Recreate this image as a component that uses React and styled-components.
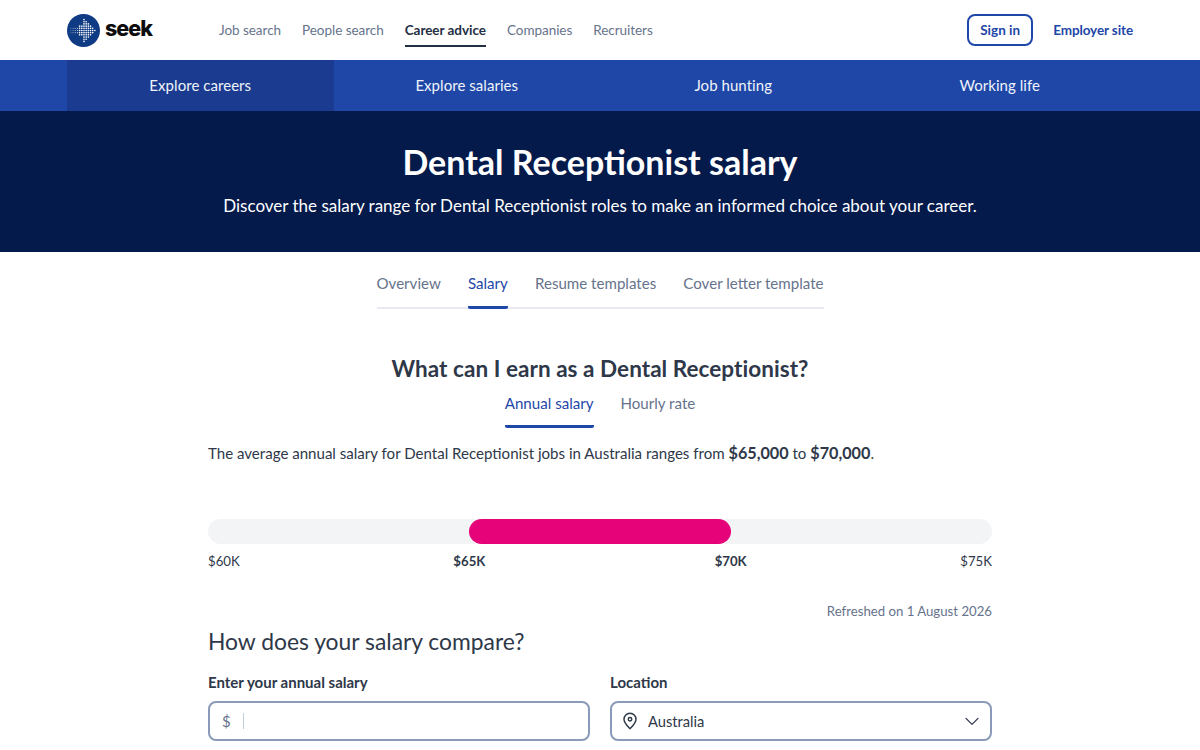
import React from "react";
import styled, { createGlobalStyle } from "styled-components";

const Global = createGlobalStyle`
  html, body { margin: 0; padding: 0; background: #fff; height: 750px; overflow: hidden; }
  body { font-family: "Lato", "Liberation Sans", sans-serif; color: #2e3849; -webkit-font-smoothing: antialiased; }
  * { box-sizing: border-box; }
`;

const Header = styled.header`
  height: 60px; display: flex; align-items: center; padding: 0 67px; background: #fff;
`;
const Brand = styled.a`
  display: flex; align-items: center; gap: 5px; width: 152px; flex: none; color: #0d0d0d; text-decoration: none;
`;
const BrandName = styled.span`
  font-family: "Inter", sans-serif; font-weight: 800; font-size: 21.5px; letter-spacing: -1px; line-height: 1; margin-top: -3px;
`;
const MainNav = styled.nav`
  display: flex; gap: 21px; height: 60px; align-items: center;
`;
const NavLink = styled.a`
  font-size: 13.5px; line-height: 22px; height: 28px; margin-top: 5px; letter-spacing: -0.04px;
  color: ${p => (p.$active ? "#232f45" : "#66738c")};
  font-weight: ${p => (p.$active ? 700 : 400)};
  border-bottom: ${p => (p.$active ? "2px solid #232f45" : "2px solid transparent")};
`;
const HeaderRight = styled.div`
  margin-left: auto; display: flex; align-items: center; gap: 20px;
`;
const SignIn = styled.a`
  width: 66px; height: 32px; border: 2px solid #1e47a8; border-radius: 8px; color: #1e47a8; font-size: 13.5px; font-weight: 700;
  display: flex; align-items: center; justify-content: center; padding-bottom: 1px;
`;
const Employer = styled.a`
  color: #1e47a8; font-size: 13.5px; font-weight: 700; letter-spacing: -0.1px; margin-top: -1px;
`;
const SubNav = styled.nav`
  height: 51px; background: #1e47a8; padding: 0 67px; display: grid; grid-template-columns: repeat(4, 1fr);
`;
const SubItem = styled.a`
  display: flex; align-items: center; justify-content: center; color: #f0f3fa; font-size: 15px; letter-spacing: 0.05px; padding-bottom: 2px;
  background: ${p => (p.$active ? "#1a3b8f" : "transparent")};
`;
const Hero = styled.section`
  height: 141px; background: #041a4b; color: #fff; display: flex; flex-direction: column; align-items: center; padding-top: 31px;
`;
const HeroTitle = styled.h1`
  margin: 0; font-size: 34px; line-height: 40px; font-weight: 700;
`;
const HeroSub = styled.p`
  margin: 11px 0 0; font-size: 17px; line-height: 26px;
`;
const Tabs = styled.div`
  display: flex; justify-content: ${p => (p.$line ? "space-between" : "center")}; gap: ${p => p.$gap}px;
  ${p => p.$line && "width: 447px; margin: 0 auto; border-bottom: 2px solid #e8eaf0;"}
`;
const Tab = styled.a`
  font-size: 15.1px; display: block; white-space: nowrap;
  padding-bottom: ${p => p.$pad}px; margin-bottom: ${p => p.$over}px;
  color: ${p => (p.$active ? "#1e47a8" : "#66738c")};
  border-bottom: 3px solid ${p => (p.$active ? "#1e47a8" : "transparent")};
  border-radius: 0 0 2px 2px;
  line-height: 22px;
`;
const TabsWrap = styled.div`
  padding-top: 20px;
`;
const Main = styled.main`
  width: 784px; margin: 0 auto;
`;
const Question = styled.h2`
  margin: 45px 0 0; text-align: center; font-size: 22.5px; line-height: 30px; font-weight: 700; color: #2e3849; letter-spacing: 0.05px;
`;
const RateTabs = styled.div`
  margin-top: 8px;
`;
const Summary = styled.p`
  margin: 13px 0 0; font-size: 15.07px; line-height: 24px; color: #2e3849;
  strong { font-weight: 700; font-size: 16.2px; }
`;
const Bar = styled.div`
  margin-top: 54px; height: 25px; border-radius: 13px; background: #f3f4f6; display: flex;
`;
const BarFill = styled.div`
  margin-left: ${p => p.$start}%; width: ${p => p.$span}%; background: #e60278; border-radius: 13px;
`;
const Ticks = styled.div`
  margin-top: 7px; display: grid; grid-template-columns: 1fr 2fr 2fr 1fr; font-size: 13.2px; line-height: 20px; color: #2e3849;
`;
const Tick = styled.span`
  text-align: ${p => p.$align};
  font-weight: ${p => (p.$bold ? 700 : 400)};
`;
const Refreshed = styled.p`
  margin: 30px 0 0; text-align: right; font-size: 13.2px; line-height: 20px; color: #66738c;
`;
const Compare = styled.h3`
  margin: 4px 0 0; font-size: 22.85px; line-height: 32px; font-weight: 400; color: #2e3849;
`;
const Form = styled.div`
  margin-top: 14px; display: grid; grid-template-columns: 1fr 1fr; gap: 20px;
`;
const Field = styled.div`
  display: flex; flex-direction: column; gap: 8px;
`;
const Label = styled.label`
  font-size: 15px; line-height: 22px; font-weight: 700; color: #2e3849;
`;
const Control = styled.div`
  height: 40px; border: 2px solid #8a9ab8; border-radius: 8px; display: flex; align-items: center; padding: 0 10px; font-size: 14.7px; color: #2e3849;
`;
const Dollar = styled.span`
  color: #66738c; font-size: 15px; margin: 0 12px 0 2px;
`;
const Caret = styled.span`
  width: 1px; height: 16px; background: #c4ccd9;
`;
const Place = styled.span`
  margin-left: 10px; flex: 1;
`;

const columns = [3, 3, 3, 3, 5, 5, 11, 9, 7, 5, 3, 1];

function Logo() {
  const dots = [];
  columns.forEach((n, i) => {
    const x = 4 + i * 2.25;
    for (let k = 0; k < n; k++) {
      const y = 17 + (k - (n - 1) / 2) * 2.25;
      dots.push(
        <circle
          key={`${i}-${k}`}
          cx={x}
          cy={y}
          r={i < 4 ? 0.6 : 0.85}
          fill="#fff"
          opacity={i < 4 ? 0.35 + i * 0.15 : 1}
        />
      );
    }
  });
  return (
    <svg width="33" height="33" viewBox="0 0 34 34">
      <circle cx="17" cy="17" r="17" fill="#0f3a84" />
      {dots}
    </svg>
  );
}

function Pin() {
  return (
    <svg width="16" height="18" viewBox="0 0 24 27" fill="none" stroke="#2e3849" strokeWidth="2.2" strokeLinecap="round" strokeLinejoin="round">
      <path d="M12 25c4.500-4.700 9-8.700 9-14.200a9 9 0 0 0-18 0C3 16.300 7.500 20.300 12 25z" />
      <circle cx="12" cy="11" r="2.600" />
    </svg>
  );
}

function Chevron() {
  return (
    <svg width="16" height="16" viewBox="0 0 24 24" fill="none" stroke="#2e3849" strokeWidth="1.9" strokeLinecap="round" strokeLinejoin="round">
      <path d="M3 8l9 9 9-9" />
    </svg>
  );
}

export default function App() {
  return (
    <>
      <Global />
      <Header>
        <Brand><Logo /><BrandName>seek</BrandName></Brand>
        <MainNav>
          <NavLink>Job search</NavLink>
          <NavLink>People search</NavLink>
          <NavLink $active>Career advice</NavLink>
          <NavLink>Companies</NavLink>
          <NavLink>Recruiters</NavLink>
        </MainNav>
        <HeaderRight>
          <SignIn>Sign in</SignIn>
          <Employer>Employer site</Employer>
        </HeaderRight>
      </Header>
      <SubNav>
        <SubItem $active>Explore careers</SubItem>
        <SubItem>Explore salaries</SubItem>
        <SubItem>Job hunting</SubItem>
        <SubItem>Working life</SubItem>
      </SubNav>
      <Hero>
        <HeroTitle>Dental Receptionist salary</HeroTitle>
        <HeroSub>Discover the salary range for Dental Receptionist roles to make an informed choice about your career.</HeroSub>
      </Hero>
      <TabsWrap>
        <Tabs $gap={20} $line>
          <Tab $pad={12} $over={-2}>Overview</Tab>
          <Tab $pad={12} $over={-2} $active>Salary</Tab>
          <Tab $pad={12} $over={-2}>Resume templates</Tab>
          <Tab $pad={12} $over={-2}>Cover letter template</Tab>
        </Tabs>
      </TabsWrap>
      <Main>
        <Question>What can I earn as a Dental Receptionist?</Question>
        <RateTabs>
          <Tabs $gap={27}>
            <Tab $pad={11} $over={0} $active>Annual salary</Tab>
            <Tab $pad={11} $over={0}>Hourly rate</Tab>
          </Tabs>
        </RateTabs>
        <Summary>
          The average annual salary for Dental Receptionist jobs in Australia ranges from <strong>$65,000</strong> to <strong>$70,000</strong>.
        </Summary>
        <Bar><BarFill $start={33.33} $span={33.33} /></Bar>
        <Ticks>
          <Tick $align="left">$60K</Tick>
          <Tick $align="center" $bold>$65K</Tick>
          <Tick $align="center" $bold>$70K</Tick>
          <Tick $align="right">$75K</Tick>
        </Ticks>
        <Refreshed>Refreshed on 1 August 2026</Refreshed>
        <Compare>How does your salary compare?</Compare>
        <Form>
          <Field>
            <Label>Enter your annual salary</Label>
            <Control><Dollar>$</Dollar><Caret /></Control>
          </Field>
          <Field>
            <Label>Location</Label>
            <Control><Pin /><Place>Australia</Place><Chevron /></Control>
          </Field>
        </Form>
      </Main>
    </>
  );
}
